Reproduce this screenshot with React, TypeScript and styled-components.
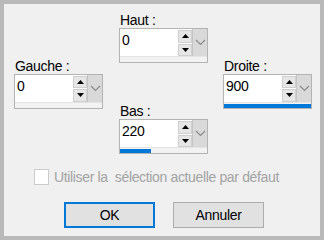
import React from "react";
import styled, { createGlobalStyle } from "styled-components";

const GlobalStyle = createGlobalStyle`
    html, body {
        margin: 0;
        padding: 0;
        background: #f0f0f0;
    }
    * {
        box-sizing: border-box;
    }
`

const Dialog = styled.div`
    width: 324px;
    height: 240px;
    border: 4px solid #b9b9b9;
    background: #f0f0f0;
    font-family: "Liberation Sans", Arial, sans-serif;
    font-size: 14px;
    letter-spacing: -0.3px;
    color: #000;
    display: flex;
    flex-direction: column;
`

const Fields = styled.div`
    display: grid;
    grid-template-columns: 105px 104px 89px;
    align-items: center;
    padding: 8px 0 0 10px;
`

const MiddleColumn = styled.div`
    display: flex;
    flex-direction: column;
    gap: 40px;
`

const Field = styled.div`
    display: flex;
    flex-direction: column;
`

const Label = styled.label`
    line-height: 16px;
    height: 16px;
    padding-left: 1px;
`

const Box = styled.div`
    width: 89px;
    height: 35px;
    border: 1px solid #b3b3b3;
    background: #fff;
    display: flex;
    flex-direction: column;
`

const InputRow = styled.div`
    flex: 1;
    display: flex;
`

const Value = styled.div`
    flex: 1;
    padding: 3px 0 0 2px;
    line-height: 16px;
`

const Spin = styled.div`
    width: 14px;
    display: flex;
    flex-direction: column;
    gap: 1px;
    padding-top: 1px;
`

const SpinButton = styled.div`
    flex: 1;
    background: #e6e6e6;
    border: 1px solid #cfcfcf;
    display: flex;
    align-items: center;
    justify-content: center;
`

const Drop = styled.div`
    width: 15px;
    background: #d9d9d9;
    border-left: 1px solid #c4c4c4;
    display: flex;
    align-items: center;
    justify-content: center;
`

const Strip = styled.div`
    height: 6px;
    background: #f2f2f2;
    border-top: 1px solid #e4e4e4;
    display: flex;
    align-items: flex-end;
`

const Bar = styled.div`
    height: 4px;
    background: #0078d7;
`

const CheckRow = styled.div`
    display: flex;
    align-items: center;
    gap: 5px;
    margin: 15px 0 0 30px;
    color: #a3a3a3;
`

const CheckBox = styled.div`
    flex-shrink: 0;
    width: 15px;
    height: 16px;
    background: #fff;
    border: 1px solid #cccccc;
`

const CheckText = styled.span`
    white-space: pre;
    letter-spacing: -0.35px;
`

const Buttons = styled.div`
    display: flex;
    gap: 18px;
    margin: 17px 0 0 60px;
`

const Button = styled.button<{ $default?: boolean }>`
    width: 91px;
    height: 26px;
    background: #e1e1e1;
    border: ${p => (p.$default ? "2px solid #0078d7" : "1px solid #adadad")};
    font-family: inherit;
    font-size: 14px;
    letter-spacing: -0.3px;
    color: #000;
    padding: 0;
`

const Arrow = ({ up }: { up?: boolean }) => (
    <svg width="7" height="4" viewBox="0 0 7 4">
        <path d={up ? "M0 4 L3.5 0 L7 4 Z" : "M0 0 L3.5 4 L7 0 Z"} fill="#000" />
    </svg>
)

const Chevron = () => (
    <svg width="11" height="7" viewBox="0 0 11 7">
        <path d="M1 1 L5.5 5.5 L10 1" fill="none" stroke="#8a8a8a" strokeWidth="1.2" />
    </svg>
)

const Spinner = ({ label, value, fill }: { label: string; value: string; fill: number }) => (
    <Field>
        <Label>{label}</Label>
        <Box>
            <InputRow>
                <Value>{value}</Value>
                <Spin>
                    <SpinButton><Arrow up /></SpinButton>
                    <SpinButton><Arrow /></SpinButton>
                </Spin>
                <Drop><Chevron /></Drop>
            </InputRow>
            <Strip>
                <Bar style={{ width: `${fill}%` }} />
            </Strip>
        </Box>
    </Field>
)

export default function App() {
    return (
        <>
            <GlobalStyle />
            <Dialog>
                <Fields>
                    <Spinner label="Gauche :" value="0" fill={0} />
                    <MiddleColumn>
                        <Spinner label="Haut :" value="0" fill={0} />
                        <Spinner label="Bas :" value="220" fill={36} />
                    </MiddleColumn>
                    <Spinner label="Droite :" value="900" fill={100} />
                </Fields>
                <CheckRow>
                    <CheckBox />
                    <CheckText>Utiliser la  sélection actuelle par défaut</CheckText>
                </CheckRow>
                <Buttons>
                    <Button $default>OK</Button>
                    <Button>Annuler</Button>
                </Buttons>
            </Dialog>
        </>
    );
}
